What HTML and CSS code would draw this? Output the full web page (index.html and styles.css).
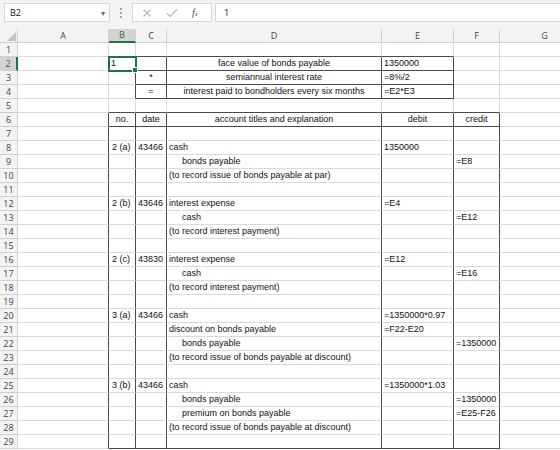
FILE: index.html
```html
<!DOCTYPE html>
<html lang="en">
<head>
    <meta charset="UTF-8">
    <title>Bonds payable - Book1</title>
    <link rel="stylesheet" href="styles.css">
</head>
<body>
    <!-- Formula bar -->
    <div class="formula-bar">
        <div class="name-box">
            <span>B2</span>
            <span class="drop">&#9662;</span>
        </div>
        <svg class="grip" width="4" height="12" viewBox="0 0 4 12">
            <circle cx="2" cy="2" r="1" fill="#8a8a8a"/>
            <circle cx="2" cy="6" r="1" fill="#8a8a8a"/>
            <circle cx="2" cy="10" r="1" fill="#8a8a8a"/>
        </svg>
        <div class="fx-buttons">
            <svg width="10" height="10" viewBox="0 0 10 10"><path d="M1.5 1.5 L8.5 8.5 M8.5 1.5 L1.5 8.5" stroke="#b4b4b4" stroke-width="1.1" fill="none"/></svg>
            <svg width="12" height="10" viewBox="0 0 12 10"><path d="M1 5.5 L4.2 8.5 L11 1.5" stroke="#b4b4b4" stroke-width="1.1" fill="none"/></svg>
            <span class="fx">f<sub>x</sub></span>
        </div>
        <div class="formula-input">1</div>
    </div>

    <!-- Worksheet -->
    <table class="sheet">
        <colgroup>
            <col class="c-row"><col class="c-a"><col class="c-b"><col class="c-c">
            <col class="c-d"><col class="c-e"><col class="c-f"><col class="c-g">
        </colgroup>
        <thead>
            <tr>
                <th class="corner"><svg width="9" height="9" viewBox="0 0 9 9"><path d="M9 0 L9 9 L0 9 Z" fill="#c4c4c4"/></svg></th>
                <th>A</th><th class="sel">B</th><th>C</th><th>D</th><th>E</th><th>F</th><th>G</th>
            </tr>
        </thead>
        <tbody>
            <tr class="top1"><th>1</th><td></td><td></td><td></td><td></td><td></td><td></td><td></td></tr>
            <tr class="box1"><th class="sel">2</th><td></td><td class="active">1</td><td></td><td class="mid">face value of bonds payable</td><td>1350000</td><td></td><td></td></tr>
            <tr class="box1"><th>3</th><td></td><td></td><td class="mid">*</td><td class="mid">semiannual interest rate</td><td>=8%/2</td><td></td><td></td></tr>
            <tr class="box1"><th>4</th><td></td><td></td><td class="mid">=</td><td class="mid">interest paid to bondholders every six months</td><td>=E2*E3</td><td></td><td></td></tr>
            <tr class="top2"><th>5</th><td></td><td></td><td></td><td></td><td></td><td></td><td></td></tr>
            <tr class="box2 edge"><th>6</th><td></td><td class="mid">no.</td><td class="mid">date</td><td class="mid">account titles and explanation</td><td class="mid">debit</td><td class="mid">credit</td><td></td></tr>
            <tr class="box2"><th>7</th><td></td><td></td><td></td><td></td><td></td><td></td><td></td></tr>
            <tr class="box2"><th>8</th><td></td><td class="no">2 (a)</td><td>43466</td><td>cash</td><td>1350000</td><td></td><td></td></tr>
            <tr class="box2"><th>9</th><td></td><td></td><td></td><td class="ind">bonds payable</td><td></td><td>=E8</td><td></td></tr>
            <tr class="box2"><th>10</th><td></td><td></td><td></td><td>(to record issue of bonds payable at par)</td><td></td><td></td><td></td></tr>
            <tr class="box2"><th>11</th><td></td><td></td><td></td><td></td><td></td><td></td><td></td></tr>
            <tr class="box2"><th>12</th><td></td><td class="no">2 (b)</td><td>43646</td><td>interest expense</td><td>=E4</td><td></td><td></td></tr>
            <tr class="box2"><th>13</th><td></td><td></td><td></td><td class="ind">cash</td><td></td><td>=E12</td><td></td></tr>
            <tr class="box2"><th>14</th><td></td><td></td><td></td><td>(to record interest payment)</td><td></td><td></td><td></td></tr>
            <tr class="box2"><th>15</th><td></td><td></td><td></td><td></td><td></td><td></td><td></td></tr>
            <tr class="box2"><th>16</th><td></td><td class="no">2 (c)</td><td>43830</td><td>interest expense</td><td>=E12</td><td></td><td></td></tr>
            <tr class="box2"><th>17</th><td></td><td></td><td></td><td class="ind">cash</td><td></td><td>=E16</td><td></td></tr>
            <tr class="box2"><th>18</th><td></td><td></td><td></td><td>(to record interest payment)</td><td></td><td></td><td></td></tr>
            <tr class="box2"><th>19</th><td></td><td></td><td></td><td></td><td></td><td></td><td></td></tr>
            <tr class="box2"><th>20</th><td></td><td class="no">3 (a)</td><td>43466</td><td>cash</td><td>=1350000*0.97</td><td></td><td></td></tr>
            <tr class="box2"><th>21</th><td></td><td></td><td></td><td>discount on bonds payable</td><td>=F22-E20</td><td></td><td></td></tr>
            <tr class="box2"><th>22</th><td></td><td></td><td></td><td class="ind">bonds payable</td><td></td><td>=1350000</td><td></td></tr>
            <tr class="box2"><th>23</th><td></td><td></td><td></td><td>(to record issue of bonds payable at discount)</td><td></td><td></td><td></td></tr>
            <tr class="box2"><th>24</th><td></td><td></td><td></td><td></td><td></td><td></td><td></td></tr>
            <tr class="box2"><th>25</th><td></td><td class="no">3 (b)</td><td>43466</td><td>cash</td><td>=1350000*1.03</td><td></td><td></td></tr>
            <tr class="box2"><th>26</th><td></td><td></td><td></td><td class="ind">bonds payable</td><td></td><td>=1350000</td><td></td></tr>
            <tr class="box2"><th>27</th><td></td><td></td><td></td><td class="ind">premium on bonds payable</td><td></td><td>=E25-F26</td><td></td></tr>
            <tr class="box2"><th>28</th><td></td><td></td><td></td><td>(to record issue of bonds payable at discount)</td><td></td><td></td><td></td></tr>
            <tr class="box2 edge"><th>29</th><td></td><td></td><td></td><td></td><td></td><td></td><td></td></tr>
        </tbody>
    </table>
</body>
</html>
```

FILE: styles.css
```css
body {
    margin: 0;
    overflow: hidden;
    background-color: #fff;
    font-family: "Liberation Sans", Arial, sans-serif;
    color: #111;
}

/* formula bar */

.formula-bar {
    display: flex;
    align-items: center;
    height: 25px;
    padding: 0 0 0 4px;
    background-color: #f3f3f3;
    border-bottom: 4px solid #f3f3f3;
    font-family: "Open Sans", "Noto Sans", sans-serif;
    font-size: 9px;
}

.name-box {
    display: flex;
    align-items: center;
    justify-content: space-between;
    width: 106px;
    height: 19px;
    box-sizing: border-box;
    padding: 0 4px 0 5px;
    background-color: #fff;
    border: 1px solid #d6d6d6;
}

.name-box .drop {
    color: #666;
    font-size: 8px;
}

.grip {
    margin: 0 9px 0 9px;
}

.fx-buttons {
    display: flex;
    align-items: center;
    gap: 14px;
    width: 80px;
    height: 19px;
    box-sizing: border-box;
    padding: 0 0 0 9px;
    background-color: #fff;
    border: 1px solid #d6d6d6;
}

.fx {
    font-family: "Liberation Serif", serif;
    font-style: italic;
    font-size: 10px;
    color: #555;
}

.fx sub {
    font-size: 7px;
    vertical-align: 0;
}

.formula-input {
    flex: 1;
    height: 19px;
    margin-left: 3px;
    box-sizing: border-box;
    padding: 0 8px;
    line-height: 17px;
    background-color: #fff;
    border: 1px solid #d6d6d6;
    border-right: 0;
}

/* worksheet grid */

.sheet {
    table-layout: fixed;
    width: 590px;
    border-collapse: separate;
    border-spacing: 0;
    font-size: 9px;
}

.c-row { width: 18px; }
.c-a { width: 91px; }
.c-b { width: 27px; }
.c-c { width: 31px; }
.c-d { width: 215px; }
.c-e { width: 72px; }
.c-f { width: 46px; }
.c-g { width: 90px; }

.sheet th,
.sheet td {
    box-sizing: border-box;
    padding: 0 0 0 2px;
    height: 14px;
    line-height: 13px;
    white-space: nowrap;
    border-right: 1px solid #dadada;
    border-bottom: 1px solid #dadada;
    text-align: left;
}

.sheet th {
    background-color: #f3f3f3;
    font-family: "Open Sans", "Noto Sans", sans-serif;
    font-weight: normal;
    color: #444;
    border-color: #d0d0d0;
    text-align: center;
    padding: 0;
    font-size: 9px;
}

.sheet thead th {
    height: 13px;
    line-height: 12px;
}

.sheet th.corner {
    text-align: right;
    vertical-align: bottom;
    padding: 0 1px 1px 0;
    line-height: 0;
}

.sheet thead th.sel {
    background-color: #d3d3d3;
    color: #217346;
    border-bottom: 2px solid #217346;
}

.sheet tbody th.sel {
    background-color: #d3d3d3;
    color: #217346;
    border-right: 2px solid #217346;
}

.sheet td.mid {
    text-align: center;
    padding: 0;
}

.sheet td.no {
    padding-left: 3px;
}

.sheet td.ind {
    padding-left: 15px;
}

.sheet td.active {
    position: relative;
    outline: 2px solid #217346;
    outline-offset: -1px;
}

.sheet td.active::after {
    content: "";
    position: absolute;
    right: -3px;
    bottom: -3px;
    width: 4px;
    height: 4px;
    background-color: #217346;
    border: 1px solid #fff;
}

/* cell borders: top box C2:E4 */

.top1 td:nth-child(n+4):nth-child(-n+6),
.box1 td:nth-child(n+4):nth-child(-n+6) {
    border-bottom-color: #4a4a4a;
}

.box1 td:nth-child(n+3):nth-child(-n+6) {
    border-right-color: #4a4a4a;
}

/* cell borders: journal B6:F29 */

.top2 td:nth-child(n+3):nth-child(-n+7),
.box2.edge td:nth-child(n+3):nth-child(-n+7) {
    border-bottom-color: #4a4a4a;
}

.box2 td:nth-child(n+2):nth-child(-n+7) {
    border-right-color: #4a4a4a;
}

.box2 td:nth-child(4),
.box2 td:nth-child(5),
.box2 td:nth-child(6) {
    border-right-color: #6e6e6e;
}
```
